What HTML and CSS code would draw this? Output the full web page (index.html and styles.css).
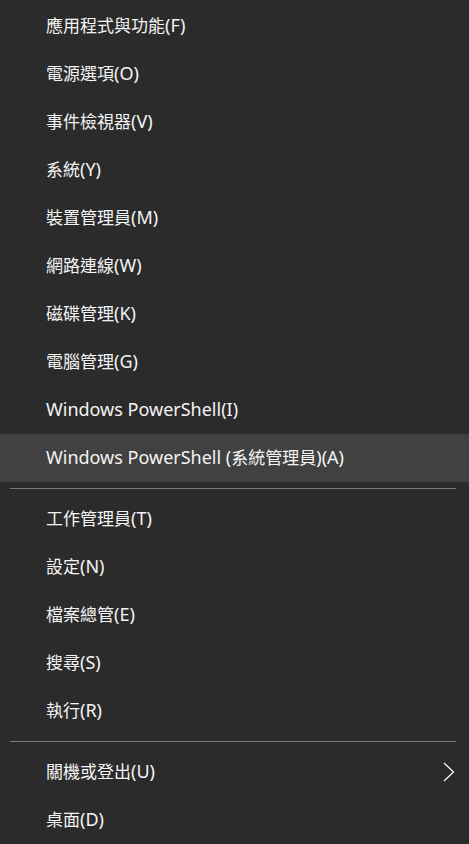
FILE: index.html
```html
<!DOCTYPE html>
<html lang="zh-Hant">
<head>
  <meta charset="UTF-8">
  <title>快速連結功能表</title>
  <link rel="stylesheet" href="styles.css">
</head>
<body>
  <div class="menu">
    <div class="item"><span class="zh">應用程式與功能</span>(F)</div>
    <div class="item"><span class="zh">電源選項</span>(O)</div>
    <div class="item"><span class="zh">事件檢視器</span>(V)</div>
    <div class="item"><span class="zh">系統</span>(Y)</div>
    <div class="item"><span class="zh">裝置管理員</span>(M)</div>
    <div class="item"><span class="zh">網路連線</span>(W)</div>
    <div class="item"><span class="zh">磁碟管理</span>(K)</div>
    <div class="item"><span class="zh">電腦管理</span>(G)</div>
    <div class="item">Windows PowerShell(I)</div>
    <div class="item hover">Windows PowerShell (<span class="zh">系統管理員</span>)(A)</div>

    <div class="sep"></div>

    <div class="item"><span class="zh">工作管理員</span>(T)</div>
    <div class="item"><span class="zh">設定</span>(N)</div>
    <div class="item"><span class="zh">檔案總管</span>(E)</div>
    <div class="item"><span class="zh">搜尋</span>(S)</div>
    <div class="item"><span class="zh">執行</span>(R)</div>

    <div class="sep"></div>

    <div class="item sub">
      <span><span class="zh">關機或登出</span>(U)</span>
      <svg class="chevron" width="12" height="20" viewBox="0 0 12 20">
        <path d="M1 1 L10.5 10 L1 19" fill="none" stroke="#fff" stroke-width="1.2"/>
      </svg>
    </div>
    <div class="item"><span class="zh">桌面</span>(D)</div>
  </div>
</body>
</html>
```

FILE: styles.css
```css
* { box-sizing: border-box; margin: 0; padding: 0; }

body {
  background: #2b2b2b;
  font-family: "Noto Sans", "Noto Sans CJK TC", sans-serif;
  color: #f4f4f4;
}

.menu {
  width: 469px;
  padding-top: 2px;
}

.item {
  display: flex;
  align-items: center;
  height: 48px;
  padding-left: 46px;
  padding-bottom: 3px;
  font-size: 18px;
  white-space: pre;
}

/* 中文字略小一點，貼近原本的字寬 */
.zh {
  font-family: "Noto Sans CJK TC", sans-serif;
  font-size: 17px;
}

.item.hover {
  background: #414141;
}

.item.sub {
  justify-content: space-between;
  padding-right: 14px;
  padding-bottom: 0;
}

.item.sub > span {
  padding-bottom: 3px;
}

.sep {
  height: 1px;
  margin: 6px 13px 6px 10px;
  background: #7a7a7a;
}
```
